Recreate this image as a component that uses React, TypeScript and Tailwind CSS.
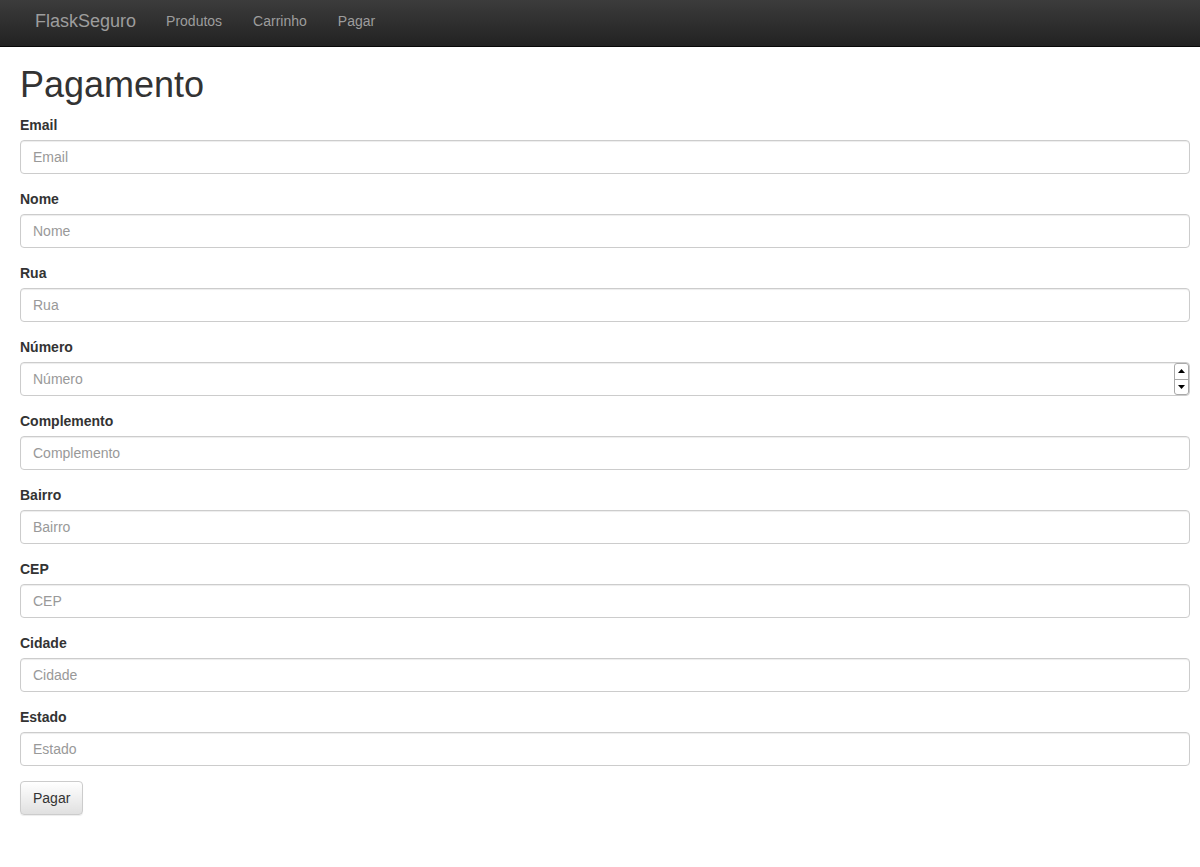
import React from "react";

const fields = [
  "Email",
  "Nome",
  "Rua",
  "Número",
  "Complemento",
  "Bairro",
  "CEP",
  "Cidade",
  "Estado",
];

const Spinner = () => (
  <div className="absolute right-[1px] top-[1px] flex h-[32px] w-[15px] flex-col overflow-hidden rounded-[3px] border border-[#a9a9a9] bg-white">
    <div className="flex flex-1 items-center justify-center border-b border-[#a9a9a9]">
      <svg width="7" height="4" viewBox="0 0 7 4">
        <path d="M0 4 L3.5 0 L7 4 Z" fill="#000" />
      </svg>
    </div>
    <div className="flex flex-1 items-center justify-center">
      <svg width="7" height="4" viewBox="0 0 7 4">
        <path d="M0 0 L3.5 4 L7 0 Z" fill="#000" />
      </svg>
    </div>
  </div>
);

const App = () => {
  return (
    <div className="min-h-[867px] bg-white font-['Liberation_Sans',Arial,sans-serif] text-[14px] leading-[20px] text-[#333]">
      <nav className="flex h-[47px] items-center border-b border-[#080808] bg-gradient-to-b from-[#3c3c3c] to-[#222] px-[20px] pb-[4px]">
        <span className="px-[15px] text-[18px] text-[#9d9d9d]">FlaskSeguro</span>
        <div className="flex">
          <a className="pl-[15px] pr-[16px] text-[14px] text-[#9d9d9d]">Produtos</a>
          <a className="pl-[15px] pr-[16px] text-[14px] text-[#9d9d9d]">Carrinho</a>
          <a className="px-[15px] text-[14px] text-[#9d9d9d]">Pagar</a>
        </div>
      </nav>
      <div className="px-[20px] pr-[10px]">
        <h1 className="mt-[18px] mb-[10px] text-[36px] leading-[40px] font-normal">Pagamento</h1>
        <form className="flex flex-col">
          {fields.map((f) => (
            <div key={f} className="mb-[15px] flex flex-col">
              <label className="mb-[5px] font-bold">{f}</label>
              <div className="relative">
                <input
                  type="text"
                  placeholder={f}
                  className="block h-[34px] w-full rounded-[4px] border border-[#ccc] bg-white px-[12px] py-[6px] text-[14px] text-[#555] shadow-[inset_0_1px_1px_rgba(0,0,0,0.075)] outline-none placeholder:text-[#999]"
                />
                {f === "Número" && <Spinner />}
              </div>
            </div>
          ))}
          <div>
            <button
              type="button"
              className="h-[34px] rounded-[4px] border border-[#ccc] bg-gradient-to-b from-white to-[#e0e0e0] px-[12px] text-[14px] text-[#333] shadow-[0_1px_0_rgba(255,255,255,0.15)_inset,0_1px_1px_rgba(0,0,0,0.075)]"
            >
              Pagar
            </button>
          </div>
        </form>
      </div>
    </div>
  );
};

export default App;
